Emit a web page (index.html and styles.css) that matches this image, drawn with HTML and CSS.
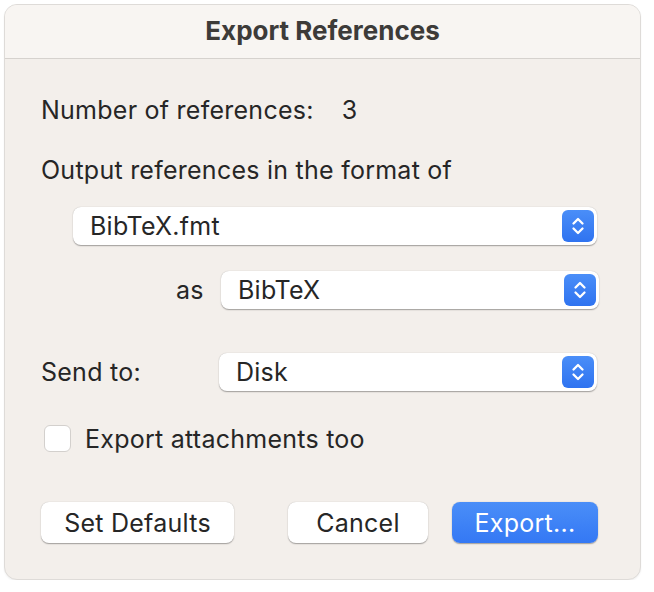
FILE: index.html
```html
<!DOCTYPE html>
<html>
<head>
<meta charset="utf-8">
<link rel="stylesheet" href="styles.css">
</head>
<body>
<div class="window">
  <div class="titlebar">Export References</div>
  <div class="content">
    <div class="row count-row"><span class="label">Number of references:</span><span class="count">3</span></div>
    <div class="row format-label">Output references in the format of</div>
    <div class="popup popup-format">
      <span class="popup-text">BibTeX.fmt</span>
      <span class="stepper"><svg width="16" height="22" viewBox="0 0 16 22"><path d="M3.5 8.5 L8 4 L12.5 8.5 M3.5 13.5 L8 18 L12.5 13.5" fill="none" stroke="#fff" stroke-width="2.3" stroke-linecap="round" stroke-linejoin="round"/></svg></span>
    </div>
    <div class="as-row">
      <span class="as-label">as</span>
      <div class="popup popup-as">
        <span class="popup-text">BibTeX</span>
        <span class="stepper"><svg width="16" height="22" viewBox="0 0 16 22"><path d="M3.5 8.5 L8 4 L12.5 8.5 M3.5 13.5 L8 18 L12.5 13.5" fill="none" stroke="#fff" stroke-width="2.3" stroke-linecap="round" stroke-linejoin="round"/></svg></span>
      </div>
    </div>
    <div class="send-row">
      <span class="send-label">Send to:</span>
      <div class="popup popup-send">
        <span class="popup-text">Disk</span>
        <span class="stepper"><svg width="16" height="22" viewBox="0 0 16 22"><path d="M3.5 8.5 L8 4 L12.5 8.5 M3.5 13.5 L8 18 L12.5 13.5" fill="none" stroke="#fff" stroke-width="2.3" stroke-linecap="round" stroke-linejoin="round"/></svg></span>
      </div>
    </div>
    <label class="check-row"><span class="checkbox"></span><span>Export attachments too</span></label>
    <div class="buttons">
      <button class="btn btn-defaults">Set Defaults</button>
      <div class="right-buttons">
        <button class="btn btn-cancel">Cancel</button>
        <button class="btn btn-primary">Export...</button>
      </div>
    </div>
  </div>
</div>
</body>
</html>
```

FILE: styles.css
```css
html, body {
  margin: 0;
  padding: 0;
  background: #ffffff;
}
body {
  padding: 4px 0 0 4px;
  font-family: "Inter", "Liberation Sans", sans-serif;
  color: #262626;
}
.window {
  width: 637px;
  height: 576px;
  box-sizing: border-box;
  border: 1px solid #dedbd8;
  border-radius: 13px;
  background: #f3efeb;
  overflow: hidden;
  box-shadow: 0 1px 2px rgba(0,0,0,0.06);
  display: flex;
  flex-direction: column;
}
.titlebar {
  height: 54px;
  flex: none;
  box-sizing: border-box;
  border-bottom: 1px solid #d6d2ce;
  background: #f8f5f2;
  display: flex;
  align-items: center;
  justify-content: center;
  font-size: 26px;
  font-weight: 650;
  color: #3d3b39;
  padding-bottom: 2px;
}
.content {
  padding: 0 0 0 36px;
  font-size: 25px;
  letter-spacing: 0.25px;
}
.row {
  display: flex;
  align-items: center;
}
.count-row {
  margin-top: 37px;
  height: 28px;
}
.count {
  margin-left: 28px;
}
.format-label {
  margin-top: 32px;
  height: 28px;
}
.popup {
  height: 38px;
  box-sizing: border-box;
  background: #ffffff;
  border-radius: 8px;
  box-shadow: 0 0.5px 1px rgba(0,0,0,0.25), 0 1px 2px rgba(0,0,0,0.12);
  display: flex;
  align-items: center;
  justify-content: space-between;
  padding: 0 3px 0 17px;
}
.popup-format {
  margin-top: 23px;
  margin-left: 32px;
  width: 524px;
}
.stepper {
  width: 32px;
  height: 32px;
  border-radius: 6px;
  background: linear-gradient(#4a8ef8, #2f73f0);
  display: flex;
  align-items: center;
  justify-content: center;
}
.as-row {
  display: flex;
  align-items: center;
  margin-top: 26px;
  margin-left: 135px;
}
.as-label {
  width: 45px;
}
.popup-as {
  width: 378px;
  padding-left: 17px;
}
.send-row {
  display: flex;
  align-items: center;
  margin-top: 44px;
}
.send-label {
  width: 178px;
}
.popup-send {
  width: 378px;
  padding-left: 17px;
}
.check-row {
  display: flex;
  align-items: center;
  margin-top: 34px;
  margin-left: 3px;
  height: 27px;
}
.checkbox {
  width: 27px;
  height: 27px;
  box-sizing: border-box;
  border: 1px solid #d3d0cd;
  border-radius: 6px;
  background: #ffffff;
  margin-right: 14px;
}
.buttons {
  display: flex;
  align-items: center;
  justify-content: space-between;
  margin-top: 50px;
  width: 557px;
}
.right-buttons {
  display: flex;
  gap: 24px;
}
.btn {
  font-family: inherit;
  font-size: 25px;
  letter-spacing: 0.25px;
  height: 41px;
  border: none;
  border-radius: 8px;
  background: #ffffff;
  color: #262626;
  box-shadow: 0 0.5px 1px rgba(0,0,0,0.25), 0 1px 2px rgba(0,0,0,0.12);
  padding: 0;
}
.btn-defaults {
  width: 193px;
}
.btn-cancel {
  width: 140px;
}
.btn-primary {
  width: 146px;
  color: #ffffff;
  background: linear-gradient(#4a8ef8, #3478f4);
}
```
